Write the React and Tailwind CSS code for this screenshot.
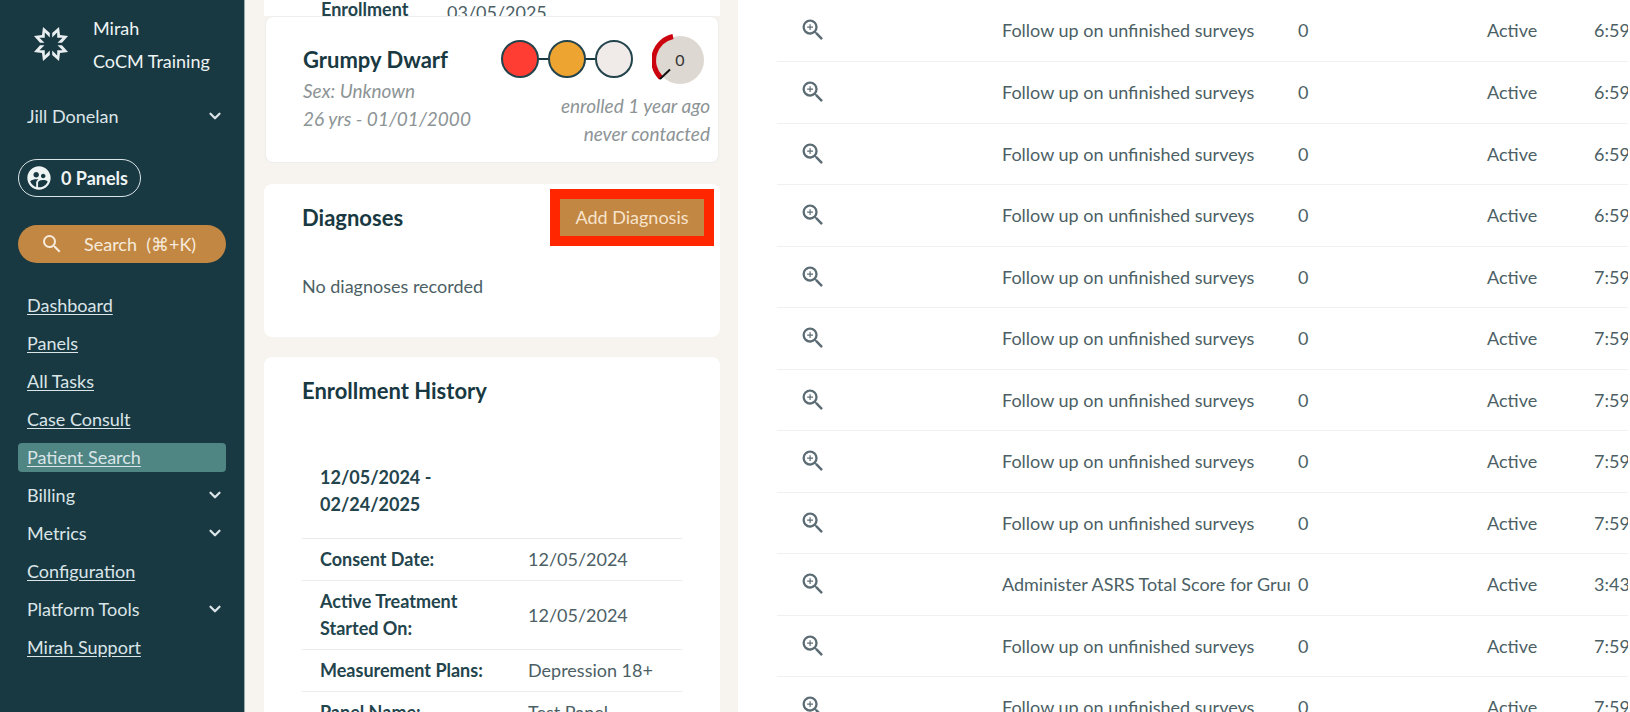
import React, { useState } from "react";
import { MdSearch, MdSupervisedUserCircle, MdZoomIn } from "react-icons/md";
import { ChevronDown } from "lucide-react";

const navItems = [
  { label: "Dashboard", link: true },
  { label: "Panels", link: true },
  { label: "All Tasks", link: true },
  { label: "Case Consult", link: true },
  { label: "Patient Search", link: true },
  { label: "Billing" },
  { label: "Metrics" },
  { label: "Configuration", link: true },
  { label: "Platform Tools" },
  { label: "Mirah Support", link: true },
];

const FOLLOW_UP = "Follow up on unfinished surveys";

const tasks = [
  { id: 1, title: FOLLOW_UP, time: "6:59 PM" },
  { id: 2, title: FOLLOW_UP, time: "6:59 PM" },
  { id: 3, title: FOLLOW_UP, time: "6:59 PM" },
  { id: 4, title: FOLLOW_UP, time: "6:59 PM" },
  { id: 5, title: FOLLOW_UP, time: "7:59 PM" },
  { id: 6, title: FOLLOW_UP, time: "7:59 PM" },
  { id: 7, title: FOLLOW_UP, time: "7:59 PM" },
  { id: 8, title: FOLLOW_UP, time: "7:59 PM" },
  { id: 9, title: FOLLOW_UP, time: "7:59 PM" },
  { id: 10, title: "Administer ASRS Total Score for Grumpy Dwarf", time: "3:43 PM" },
  { id: 11, title: FOLLOW_UP, time: "7:59 PM" },
  { id: 12, title: FOLLOW_UP, time: "7:59 PM" },
];

const history = [
  { label: "Consent Date:", value: "12/05/2024" },
  { label: "Active Treatment Started On:", value: "12/05/2024" },
  { label: "Measurement Plans:", value: "Depression 18+" },
  { label: "Panel Name:", value: "Test Panel" },
];

const Logo = () => (
  <svg className="h-9 w-9 shrink-0" viewBox="-18 -18 36 36" fill="#e9eef0" aria-hidden="true">
    {[0, 90, 180, 270].map((angle) => (
      <path
        key={angle}
        transform={`rotate(${angle})`}
        d="M1.2 -11 L8 -17 L9 -9 L17 -8 L11 -1.2 L6.5 -1.2 L11.5 -6.2 L6.2 -6.2 L6.2 -11.5 L1.2 -6.5 Z"
      />
    ))}
  </svg>
);

const StatusDots = () => (
  <svg className="h-10 w-[134px]" viewBox="0 0 134 40" aria-hidden="true">
    <path d="M20 20h94" stroke="#193942" strokeWidth="2" />
    <g stroke="#23444c" strokeWidth="2">
      <circle cx="20" cy="20" r="18" fill="#ff3d32" />
      <circle cx="67" cy="20" r="18" fill="#eda431" />
      <circle cx="114" cy="20" r="18" fill="#f0eae8" />
    </g>
  </svg>
);

const Gauge = () => (
  <svg className="h-[52px] w-[54px]" viewBox="0 0 54 52" role="img" aria-label="Score 0">
    <circle cx="28" cy="27" r="24" fill="#ddd8d1" />
    <path d="M21 3.5 A24.5 24.5 0 0 0 9 45" fill="none" stroke="#cc0410" strokeWidth="5" />
    <path d="M8 46 L18 36.5" stroke="#111" strokeWidth="2" />
    <text x="28" y="33" textAnchor="middle" fontSize="16" fill="#333">
      0
    </text>
  </svg>
);

const NavItem = ({ item, active, onSelect }) => {
  const base = "flex h-[29px] w-full items-center justify-between rounded pr-0.5 pb-0.5 pl-[9px]";
  if (!item.link) {
    return (
      <button type="button" className={base}>
        <span>{item.label}</span>
        <ChevronDown className="h-[18px] w-[18px]" strokeWidth={3} />
      </button>
    );
  }
  return (
    <a
      href="#"
      onClick={() => onSelect(item.label)}
      className={`${base} underline underline-offset-2 ${active ? "bg-[#4f8583]" : ""}`}
    >
      {item.label}
    </a>
  );
};

const Sidebar = () => {
  const [current, setCurrent] = useState("Patient Search");

  return (
    <aside className="w-[245px] shrink-0 border-r border-[#9aa9ac] bg-[#193942] px-[18px] text-[#dbe5e8]">
      <div className="flex items-start gap-6 pt-3 pl-[15px]">
        <div className="pt-3.5">
          <Logo />
        </div>
        <div className="leading-[33px] whitespace-nowrap text-[#eef3f4]">
          <p>Mirah</p>
          <p>CoCM Training</p>
        </div>
      </div>
      <button type="button" className="mt-6 flex h-[29px] w-full items-center justify-between pr-0.5 pb-0.5 pl-[9px]">
        <span>Jill Donelan</span>
        <ChevronDown className="h-[18px] w-[18px]" strokeWidth={3} />
      </button>
      <button
        type="button"
        className="mt-7 flex h-[38px] items-center gap-2 rounded-full border border-[#dbe5e8] pr-3 pl-1.5 font-bold text-[#eef3f4]"
      >
        <MdSupervisedUserCircle className="h-7 w-7" />
        0 Panels
      </button>
      <button
        type="button"
        className="mt-7 flex h-[38px] w-full items-center rounded-full bg-[#c28743] pl-[22px] text-[#f7ebdc]"
      >
        <MdSearch className="h-6 w-6" />
        <span className="pl-5 whitespace-pre">Search  (⌘+K)</span>
      </button>
      <nav className="mt-7 flex flex-col gap-[9px]">
        {navItems.map((item) => (
          <NavItem
            key={item.label}
            item={item}
            active={item.label === current}
            onSelect={setCurrent}
          />
        ))}
      </nav>
    </aside>
  );
};

const PatientPanel = () => (
  <section className="h-screen w-[493px] shrink-0 overflow-hidden bg-[#f7f3ee] pr-[18px] pl-[19px]">
    {/* Tail of the enrollment card, scrolled under the patient header */}
    <div className="flex h-4 items-start overflow-hidden bg-white pl-[57px]">
      <span className="w-[126px] leading-[18px] font-bold text-[#23444c]">Enrollment</span>
      <span className="leading-6 text-[#4c5f65]">03/05/2025</span>
    </div>

    <div className="mx-px flex h-[147px] justify-between rounded-lg border border-[#eeeeec] bg-white pt-4 pr-2 pl-[37px]">
      <div className="pt-3 text-[19px] leading-7 text-[#8d9496] italic">
        <h1 className="text-[22px] leading-[30px] font-bold text-[#193942] not-italic">Grumpy Dwarf</h1>
        <p className="pt-0.5">Sex: Unknown</p>
        <p>26 yrs - 01/01/2000</p>
      </div>
      <div className="flex flex-col items-end text-[19px] leading-7 text-[#8d9496] italic">
        <div className="flex items-center gap-[18px] pr-1 not-italic">
          <StatusDots />
          <Gauge />
        </div>
        <p className="pt-[7px]">enrolled 1 year ago</p>
        <p>never contacted</p>
      </div>
    </div>

    <div className="mt-[21px] h-[153px] rounded-lg bg-white pr-[6px] pl-[38px]">
      <div className="flex items-start justify-between pt-[5px]">
        <h2 className="pt-3.5 text-[22px] leading-[30px] font-bold text-[#193942]">Diagnoses</h2>
        <button
          type="button"
          className="h-[57px] w-[164px] border-10 border-[#ff2600] bg-[#c28743] pb-0.5 text-[#f7e3cb]"
        >
          Add Diagnosis
        </button>
      </div>
      <p className="pt-[26px] leading-7 text-[#4c5f65]">No diagnoses recorded</p>
    </div>

    <div className="mt-5 rounded-lg bg-white px-[38px] pt-[19px] pb-8">
      <h2 className="text-[22px] leading-[30px] font-bold text-[#193942]">Enrollment History</h2>
      <table className="mt-10 w-full text-left">
        <thead>
          <tr className="border-b border-[#ececec]">
            <th className="w-[208px] pt-[18px] pb-5 pl-[18px] leading-[27px] font-bold text-[#23444c]">
              12/05/2024 -<br />
              02/24/2025
            </th>
            <td />
          </tr>
        </thead>
        <tbody>
          {history.map((row) => (
            <tr key={row.label} className="border-b border-[#ececec]">
              <th className="py-[7px] pr-2 pl-[18px] leading-[27px] font-bold text-[#23444c]">{row.label}</th>
              <td className="py-[7px] pl-[18px] leading-[27px] text-[#4c5f65]">{row.value}</td>
            </tr>
          ))}
        </tbody>
      </table>
    </div>
  </section>
);

const TaskTable = () => (
  <main className="h-screen min-w-0 flex-1 bg-white pr-0.5 pl-[39px]">
    <div className="h-full overflow-hidden">
      <table className="w-[1000px] table-fixed text-left text-[#4c5f65]">
        <colgroup>
          <col className="w-[225px]" />
          <col className="w-[288px]" />
          <col className="w-[197px]" />
          <col className="w-[107px]" />
          <col />
        </colgroup>
        <tbody>
          {tasks.map((task) => (
            <tr key={task.id} className="h-[61px] border-b border-[#f0f0f0] even:h-[62px]">
              <td className="pl-[22px]">
                <button type="button" aria-label={`View ${task.title}`} className="block text-[#5b6b73]">
                  <MdZoomIn className="h-7 w-7" />
                </button>
              </td>
              <td>
                <div className="overflow-hidden whitespace-nowrap">{task.title}</div>
              </td>
              <td className="pl-2">0</td>
              <td>Active</td>
              <td className="whitespace-nowrap">{task.time}</td>
            </tr>
          ))}
        </tbody>
      </table>
    </div>
  </main>
);

const App = () => (
  <div className="flex h-screen overflow-hidden bg-white font-[Lato,sans-serif] text-lg">
    <Sidebar />
    <PatientPanel />
    <TaskTable />
  </div>
);

export default App;
